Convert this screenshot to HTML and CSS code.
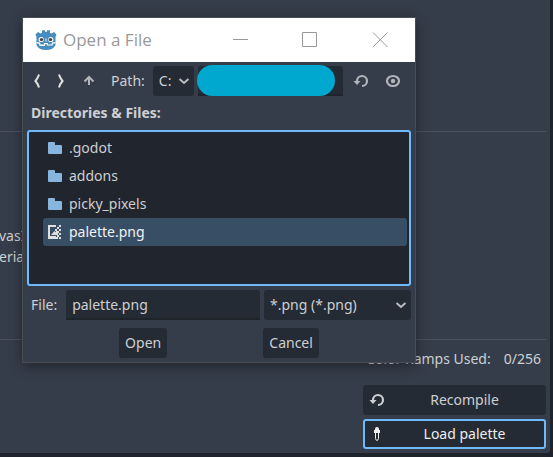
FILE: index.html
```html
<!DOCTYPE html>
<html lang="en">
<head>
<meta charset="utf-8">
<title>Open a File</title>
<link rel="stylesheet" href="styles.css">
</head>
<body>
<main class="editor">
  <section class="pane pane-top"></section>
  <section class="pane pane-middle">
    <p class="node-type">vasI<br>eria</p>
  </section>
  <section class="pane-bottom">
    <p class="stats"><span>Color Ramps Used:</span><span>0/256</span></p>
    <div class="actions">
      <button class="action" type="button">
        <svg class="icon" viewBox="0 0 16 16" aria-hidden="true"><path d="M4 9V8a5 5 0 1 1 5 5" fill="none" stroke="currentColor" stroke-width="2.200"/><path d="M.5 8h7L4 12z" fill="currentColor"/></svg>
        <span class="action-text">Recompile</span>
      </button>
      <button class="action action-focused" type="button">
        <svg class="icon" viewBox="0 0 16 16" aria-hidden="true"><path d="M6 3q0-2 2-2t2 2v1h1v3H5V4h1z" fill="currentColor"/><path d="M6.500 7v5.500Q7 14.500 8 14.500t1.500-2V7" fill="none" stroke="currentColor"/></svg>
        <span class="action-text">Load palette</span>
      </button>
    </div>
  </section>
</main>

<div class="dialog" role="dialog" aria-labelledby="dialog-title">
  <header class="titlebar">
    <svg class="logo" viewBox="0 0 22 22" aria-hidden="true">
      <path d="M.5 5.500L3 3l2.500 1.500L7 4V1.500L9.500 1l1 2h1l1-2 2.500.5V4l1.500.5L19 3l2.500 2.500L20.500 8v8q-2 5-9.500 5t-9.500-5V8z" fill="#478cbf"/>
      <path d="M1.500 13l3.500.5.5 2H9v-1.500h4v1.500h3.500l.5-2 3.500-.5v1.200l-2.500.5-.5 1.800H12V15.200h-2v1.800H4.500L4 14.700l-2.500-.5z" fill="#fff"/>
      <circle cx="6.200" cy="10.500" r="2.600" fill="#fff"/><circle cx="15.800" cy="10.500" r="2.600" fill="#fff"/>
      <circle cx="6.500" cy="10.600" r="1.700" fill="#414042"/><circle cx="15.500" cy="10.600" r="1.700" fill="#414042"/>
      <path d="M10.500 9.500h1v3h-1z" fill="#fff"/>
    </svg>
    <h1 class="title" id="dialog-title">Open a File</h1>
    <div class="window-buttons">
      <button type="button" aria-label="Minimize"><svg viewBox="0 0 16 16"><path d="M1 7.500h15"/></svg></button>
      <button type="button" aria-label="Maximize"><svg viewBox="0 0 16 16"><path d="M.5.5h14v14H.5z"/></svg></button>
      <button type="button" aria-label="Close"><svg viewBox="0 0 16 16"><path d="M1 .5l14.500 14.500M15.500.5L1 15"/></svg></button>
    </div>
  </header>
  <div class="content">
    <div class="toolbar">
      <button class="tool" type="button" aria-label="Back"><svg class="icon" viewBox="0 0 16 16"><path d="M10 1.500Q9 5 6.500 8 9 11 10 14.500" fill="none" stroke="#e0e0e0" stroke-width="2"/></svg></button>
      <button class="tool" type="button" aria-label="Forward"><svg class="icon" viewBox="0 0 16 16"><path d="M6 1.500Q7 5 9.500 8 7 11 6 14.500" fill="none" stroke="#e0e0e0" stroke-width="2"/></svg></button>
      <button class="tool tool-up" type="button" aria-label="Parent folder"><svg class="icon" viewBox="0 0 16 16"><path d="M8 12V5M3.500 8.500L8 4l4.500 4.500" fill="none" stroke="#b2b5b9" stroke-width="2"/></svg></button>
      <label class="path-label" for="path">Path:</label>
      <div class="dropdown drive">
        <select aria-label="Drive"><option>C:</option></select>
        <svg class="icon" viewBox="0 0 16 16" aria-hidden="true"><path d="M3.500 6L8 10l4.500-4"/></svg>
      </div>
      <div class="path-box">
        <input class="field" id="path" type="text">
        <span class="redaction"></span>
      </div>
      <button class="tool tool-refresh" type="button" aria-label="Refresh"><svg class="icon" viewBox="0 0 16 16"><path d="M4 9V8a5 5 0 1 1 5 5" fill="none" stroke="#b2b5b9" stroke-width="2.200"/><path d="M.5 8h7L4 12z" fill="#b2b5b9"/></svg></button>
      <button class="tool" type="button" aria-label="Toggle hidden files"><svg class="icon" viewBox="0 0 16 16"><ellipse cx="8" cy="8" rx="6" ry="5" fill="none" stroke="#b2b5b9" stroke-width="2.200"/><circle cx="8" cy="8" r="2.200" fill="#b2b5b9"/></svg></button>
    </div>
    <h2 class="list-title">Directories &amp; Files:</h2>
    <ul class="files">
      <li><svg class="icon folder" viewBox="0 0 16 16" aria-hidden="true"><path d="M2 2h5q1 0 1 1v2h6q1 0 1 1v7q0 1-1 1H2q-1 0-1-1V3q0-1 1-1z"/></svg>.godot</li>
      <li><svg class="icon folder" viewBox="0 0 16 16" aria-hidden="true"><path d="M2 2h5q1 0 1 1v2h6q1 0 1 1v7q0 1-1 1H2q-1 0-1-1V3q0-1 1-1z"/></svg>addons</li>
      <li><svg class="icon folder" viewBox="0 0 16 16" aria-hidden="true"><path d="M2 2h5q1 0 1 1v2h6q1 0 1 1v7q0 1-1 1H2q-1 0-1-1V3q0-1 1-1z"/></svg>picky_pixels</li>
      <li class="selected"><svg class="icon" viewBox="0 0 16 16" aria-hidden="true"><path d="M1 1h8v2H3v9h6v1h2v2H1zM4 11l3.500-4L9 8.500V7h2v4zM8 5h2v2H8zM10 3h2v2h-2zM12 1h2v2h-2zM12 5h2v2h-2zM11 7h1v2h-1zM12 9h2v2h-2zM10 11h2v2h-2zM12 13h2v2h-2z" fill="#e0e0e0"/></svg>palette.png</li>
    </ul>
    <div class="file-row">
      <label class="file-label" for="file">File:</label>
      <input class="field file-name" id="file" type="text" value="palette.png">
      <div class="dropdown filter">
        <select aria-label="File type"><option>*.png (*.png)</option></select>
        <svg class="icon" viewBox="0 0 16 16" aria-hidden="true"><path d="M3.500 6L8 10l4.500-4"/></svg>
      </div>
    </div>
    <div class="confirm">
      <button class="button" type="button">Open</button>
      <button class="button" type="button">Cancel</button>
    </div>
  </div>
</div>
</body>
</html>
```

FILE: styles.css
```css
* {
  box-sizing: border-box;
}

body {
  margin: 0;
  background: #1f242c;
  color: #cdcfd2;
  font: 14px/20px "Noto Sans", sans-serif;
}

h1, h2, p, ul {
  margin: 0;
  padding: 0;
}

button, input, select {
  margin: 0;
  border: 0;
  border-radius: 3px;
  background: #252b34;
  color: inherit;
  font: inherit;
}

.icon {
  flex: none;
  display: block;
  width: 16px;
  height: 16px;
}

.editor {
  display: flex;
  flex-direction: column;
  min-height: calc(100vh - 4px);
  margin: 0 3px 4px 0;
  padding: 0 4px 4px 0;
  border-radius: 0 0 3px 0;
  background: #363d4a;
}

.pane {
  border-bottom: 1px solid #4a505c;
}

.pane-top {
  height: 132px;
}

.pane-middle {
  flex: 1;
  padding-top: 93px;
}

.node-type {
  margin-left: -1px;
  line-height: 21px;
}

.pane-bottom {
  display: flex;
  flex-direction: column;
  align-items: flex-end;
  gap: 16px;
  padding-top: 9px;
}

.stats {
  display: flex;
  gap: 13px;
  padding-right: 5px;
}

.actions {
  display: flex;
  flex-direction: column;
  gap: 4px;
  width: 183px;
}

.action {
  display: flex;
  align-items: center;
  height: 30px;
  padding: 0 6px;
}

.action-text {
  flex: 1;
  padding-left: 4px;
}

.action-focused {
  outline: 2px solid #70bafa;
  outline-offset: -2px;
  color: #eee;
}

.dialog {
  position: absolute;
  top: 17px;
  left: 22px;
  right: 137px;
  border: 1px solid #494c51;
  background: #363d4a;
  box-shadow: 0 3px 12px rgba(0, 0, 0, 0.4);
}

.titlebar {
  display: flex;
  align-items: center;
  height: 44px;
  padding-left: 12px;
  background: #fff;
}

.logo {
  width: 22px;
  height: 22px;
}

.title {
  flex: 1;
  padding-left: 6px;
  color: #999;
  font: 17px/24px "Open Sans", sans-serif;
}

.window-buttons {
  display: flex;
}

.window-buttons button {
  display: grid;
  place-items: center;
  width: 70px;
  height: 44px;
  padding: 0;
  background: none;
}

.window-buttons svg {
  width: 16px;
  height: 16px;
  fill: none;
  stroke: #999;
}

.content {
  padding: 4px;
}

.toolbar {
  display: flex;
  align-items: center;
}

.tool {
  display: grid;
  place-items: center;
  width: 24px;
  height: 30px;
  padding: 0;
  background: none;
}

.tool:first-child {
  margin-left: -2px;
}

.tool-up {
  margin-left: 4px;
}

.tool-refresh {
  margin: 0 8px 0 6px;
}

.toolbar .tool:last-child {
  margin-right: 6px;
}

.path-label {
  padding: 0 8px 0 10px;
}

.dropdown {
  position: relative;
}

.dropdown select {
  appearance: none;
  display: block;
  width: 100%;
  height: 30px;
  padding: 0 20px 0 6px;
}

.dropdown .icon {
  position: absolute;
  top: 7px;
  right: 2px;
  fill: none;
  stroke: #b9bcc0;
  stroke-width: 2;
  pointer-events: none;
}

.drive {
  width: 41px;
}

.path-box {
  position: relative;
  flex: 1;
  margin-left: 4px;
}

.field {
  display: block;
  width: 100%;
  height: 30px;
  padding: 0 6px;
  border-bottom: 2px solid #1f242b;
  border-radius: 3px 3px 0 0;
}

.redaction {
  position: absolute;
  inset: -1px 8px 0 -1px;
  border-radius: 16px;
  background: #00a8d0;
}

.list-title {
  padding: 7px 4px;
  font-size: 14px;
  line-height: 20px;
}

.files {
  height: 156px;
  padding: 2px 2px 2px 14px;
  border: 2px solid #70bafa;
  border-radius: 3px;
  background: #21252e;
  list-style: none;
}

.files li {
  display: flex;
  align-items: center;
  gap: 6px;
  height: 28px;
  padding-left: 4px;
  border-radius: 3px;
}

.files .selected {
  background: #384e65;
  color: #f2f2f2;
}

.folder {
  fill: #87b5dd;
}

.file-row {
  display: flex;
  align-items: center;
  gap: 4px;
  margin-top: 4px;
}

.file-label {
  padding: 0 5px 0 4px;
}

.file-name {
  flex: 1;
  width: 0;
}

.filter {
  width: 147px;
}

.confirm {
  display: flex;
  justify-content: space-evenly;
  gap: 4px;
  margin-top: 8px;
}

.button {
  height: 30px;
  padding: 0 6px;
}
```
